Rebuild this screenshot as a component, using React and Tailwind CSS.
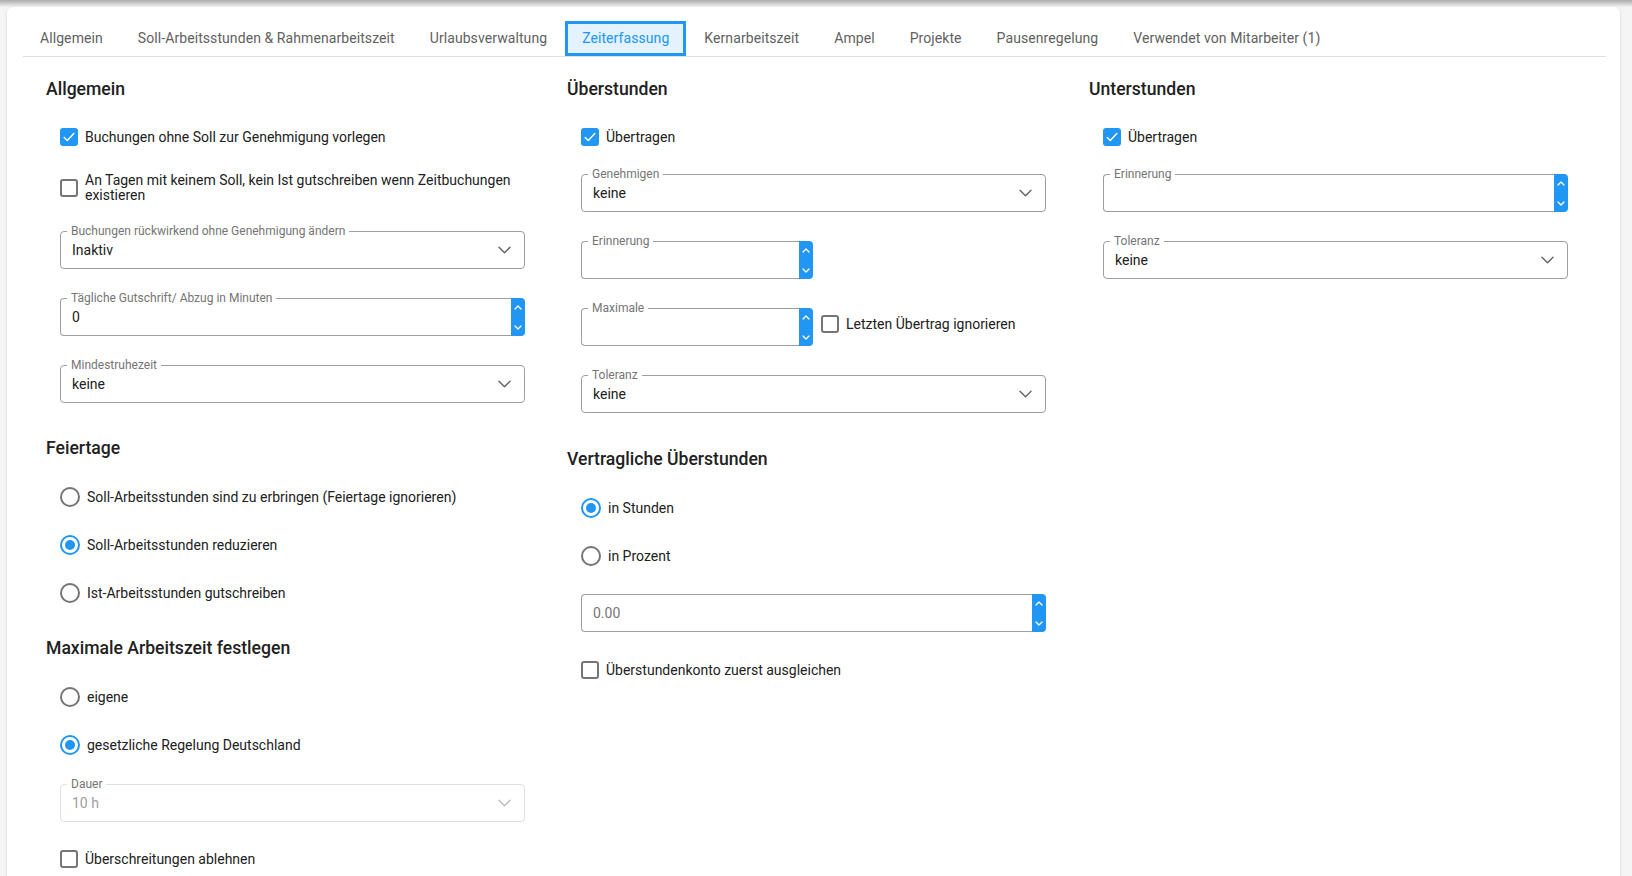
import React from "react";

const tabs = [
  "Allgemein",
  "Soll-Arbeitsstunden & Rahmenarbeitszeit",
  "Urlaubsverwaltung",
  "Zeiterfassung",
  "Kernarbeitszeit",
  "Ampel",
  "Projekte",
  "Pausenregelung",
  "Verwendet von Mitarbeiter (1)",
];

function ChevronDown({ color = "#616161" }) {
  return (
    <svg width="13" height="8" viewBox="0 0 13 8" fill="none">
      <path d="M1 1.2l5.5 5.5L12 1.2" stroke={color} strokeWidth="1.4" strokeLinecap="round" strokeLinejoin="round" />
    </svg>
  );
}

function Checkbox({ checked }) {
  if (checked) {
    return (
      <span className="flex h-[18px] w-[18px] shrink-0 items-center justify-center rounded-[3px] bg-[#2196f3]">
        <svg width="14" height="14" viewBox="0 0 14 14" fill="none">
          <path d="M2.2 7.4l3.1 3.1L11.8 3.6" stroke="white" strokeWidth="1.4" strokeLinecap="round" strokeLinejoin="round" />
        </svg>
      </span>
    );
  }
  return <span className="h-[18px] w-[18px] shrink-0 rounded-[3px] border-2 border-[#757575]" />;
}

function CheckRow({ checked, children, className = "" }) {
  return (
    <div className={`flex h-[24px] items-center gap-[7px] text-[14px] text-[#212121] ${className}`}>
      <Checkbox checked={checked} />
      <span>{children}</span>
    </div>
  );
}

function Radio({ checked, children, className = "" }) {
  return (
    <div className={`flex h-[24px] items-center gap-[7px] text-[14px] text-[#212121] ${className}`}>
      {checked ? (
        <span className="flex h-[20px] w-[20px] shrink-0 items-center justify-center rounded-full border-2 border-[#2196f3]">
          <span className="h-[10px] w-[10px] rounded-full bg-[#2196f3]" />
        </span>
      ) : (
        <span className="h-[20px] w-[20px] shrink-0 rounded-full border-2 border-[#757575]" />
      )}
      <span>{children}</span>
    </div>
  );
}

function Heading({ children, className = "" }) {
  return (
    <div className={`h-[24px] text-[17.6px] leading-[24px] font-medium text-[#212121] ${className}`}>{children}</div>
  );
}

function SelectField({ label, value, disabled, className = "" }) {
  return (
    <div
      className={`relative flex h-[38px] w-[465px] items-center rounded-[4px] border pl-[11px] pr-[13px] ${
        disabled ? "border-[#e0e0e0]" : "border-[#9e9e9e]"
      } ${className}`}
    >
      <span className="absolute -top-[8px] left-[6px] bg-white px-[4px] text-[12px] leading-[14px] text-[#757575]">
        {label}
      </span>
      <span className={`flex-1 text-[14px] ${disabled ? "text-[#9e9e9e]" : "text-[#212121]"}`}>{value}</span>
      <ChevronDown color={disabled ? "#bdbdbd" : "#616161"} />
    </div>
  );
}

function NumberField({ label, value, placeholder, widthClass = "w-[465px]", className = "" }) {
  return (
    <div className={`flex h-[38px] ${widthClass} ${className}`}>
      <div className="relative flex flex-1 items-center rounded-l-[4px] border border-r-0 border-[#9e9e9e] pl-[11px]">
        {label && (
          <span className="absolute -top-[8px] left-[6px] bg-white px-[4px] text-[12px] leading-[14px] text-[#757575]">
            {label}
          </span>
        )}
        {value !== undefined ? (
          <span className="text-[14px] text-[#212121]">{value}</span>
        ) : (
          <span className="text-[14px] text-[#757575]">{placeholder}</span>
        )}
      </div>
      <div className="flex w-[14px] flex-col items-center justify-between rounded-r-[4px] bg-[#2196f3] pt-[7px] pb-[6px]">
        <svg width="8" height="5" viewBox="0 0 8 5" fill="none">
          <path d="M1 4l3-3 3 3" stroke="white" strokeWidth="1.3" strokeLinecap="round" strokeLinejoin="round" />
        </svg>
        <svg width="8" height="5" viewBox="0 0 8 5" fill="none">
          <path d="M1 1l3 3 3-3" stroke="white" strokeWidth="1.3" strokeLinecap="round" strokeLinejoin="round" />
        </svg>
      </div>
    </div>
  );
}

export default function App() {
  return (
    <div className="h-[876px] w-[1632px] overflow-hidden bg-[#f5f5f5] font-[family-name:Roboto,sans-serif]">
      <div className="h-[7px] bg-linear-to-b from-[#ababab] to-[#f3f3f3]" />
      <div className="ml-[7px] h-[900px] w-[1613px] rounded-t-[6px] bg-white pt-[14px] pl-[16px] pr-[14px] shadow-[0_1px_3px_rgba(0,0,0,0.15)]">
        {/* Tabs */}
        <div className="flex h-[36px] gap-[1px] border-b border-[#e0e0e0]">
          {tabs.map((t) =>
            t === "Zeiterfassung" ? (
              <div
                key={t}
                className="flex h-[35px] items-center border-[3px] border-[#2196f3] bg-[#e3f2fd] px-[14px] text-[14px] tracking-[0.08px] text-[#2196f3]"
              >
                {t}
              </div>
            ) : (
              <div key={t} className="flex h-[35px] items-center px-[17px] text-[14px] tracking-[0.08px] text-[#616161]">
                {t}
              </div>
            )
          )}
        </div>

        {/* Content */}
        <div className="grid grid-cols-[521px_522px_auto] pt-[20px] pl-[23px]">
          {/* Column 1 */}
          <div className="flex flex-col">
            <Heading>Allgemein</Heading>
            <div className="flex flex-col pl-[14px]">
              <CheckRow checked className="mt-[24px]">
                Buchungen ohne Soll zur Genehmigung vorlegen
              </CheckRow>
              <div className="mt-[24px] flex h-[30px] w-[465px] items-center gap-[7px] text-[14px] leading-[15px] text-[#212121]">
                <Checkbox checked={false} />
                <span>An Tagen mit keinem Soll, kein Ist gutschreiben wenn Zeitbuchungen existieren</span>
              </div>
              <SelectField className="mt-[28px]" label="Buchungen rückwirkend ohne Genehmigung ändern" value="Inaktiv" />
              <NumberField className="mt-[29px]" label="Tägliche Gutschrift/ Abzug in Minuten" value="0" />
              <SelectField className="mt-[29px]" label="Mindestruhezeit" value="keine" />
            </div>
            <Heading className="mt-[33px]">Feiertage</Heading>
            <div className="flex flex-col pl-[14px]">
              <Radio className="mt-[25px]">Soll-Arbeitsstunden sind zu erbringen (Feiertage ignorieren)</Radio>
              <Radio checked className="mt-[24px]">
                Soll-Arbeitsstunden reduzieren
              </Radio>
              <Radio className="mt-[24px]">Ist-Arbeitsstunden gutschreiben</Radio>
            </div>
            <Heading className="mt-[31px]">Maximale Arbeitszeit festlegen</Heading>
            <div className="flex flex-col pl-[14px]">
              <Radio className="mt-[25px]">eigene</Radio>
              <Radio checked className="mt-[24px]">
                gesetzliche Regelung Deutschland
              </Radio>
              <SelectField className="mt-[27px]" label="Dauer" value="10 h" disabled />
              <CheckRow checked={false} className="mt-[25px]">
                Überschreitungen ablehnen
              </CheckRow>
            </div>
          </div>

          {/* Column 2 */}
          <div className="flex flex-col">
            <Heading>Überstunden</Heading>
            <div className="flex flex-col pl-[14px]">
              <CheckRow checked className="mt-[24px]">
                Übertragen
              </CheckRow>
              <SelectField className="mt-[25px]" label="Genehmigen" value="keine" />
              <NumberField className="mt-[29px]" widthClass="w-[232px]" label="Erinnerung" />
              <div className="mt-[29px] flex items-start gap-[8px]">
                <NumberField widthClass="w-[232px]" label="Maximale" />
                <CheckRow checked={false} className="mt-[4px]">
                  Letzten Übertrag ignorieren
                </CheckRow>
              </div>
              <SelectField className="mt-[29px]" label="Toleranz" value="keine" />
            </div>
            <Heading className="mt-[34px]">Vertragliche Überstunden</Heading>
            <div className="flex flex-col pl-[14px]">
              <Radio checked className="mt-[25px]">
                in Stunden
              </Radio>
              <Radio className="mt-[24px]">in Prozent</Radio>
              <NumberField className="mt-[26px]" placeholder="0.00" />
              <CheckRow checked={false} className="mt-[26px]">
                Überstundenkonto zuerst ausgleichen
              </CheckRow>
            </div>
          </div>

          {/* Column 3 */}
          <div className="flex flex-col">
            <Heading>Unterstunden</Heading>
            <div className="flex flex-col pl-[14px]">
              <CheckRow checked className="mt-[24px]">
                Übertragen
              </CheckRow>
              <NumberField className="mt-[25px]" label="Erinnerung" />
              <SelectField className="mt-[29px]" label="Toleranz" value="keine" />
            </div>
          </div>
        </div>
      </div>
    </div>
  );
}
